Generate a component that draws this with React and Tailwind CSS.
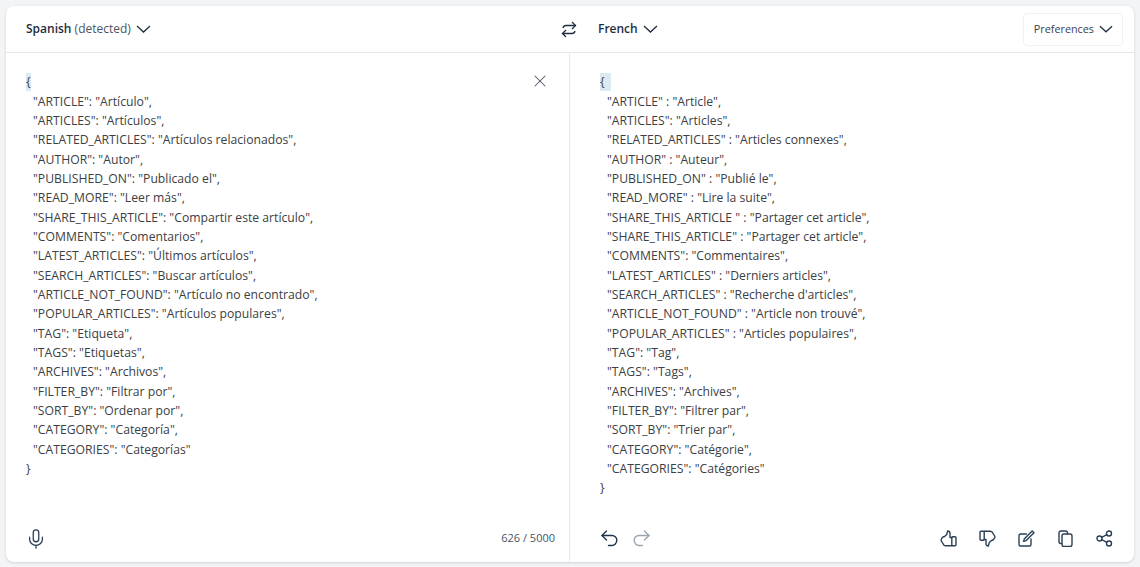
import { X, Mic } from 'lucide-react'

const SOURCE = [
  '"ARTICLE": "Artículo",',
  '"ARTICLES": "Artículos",',
  '"RELATED_ARTICLES": "Artículos relacionados",',
  '"AUTHOR": "Autor",',
  '"PUBLISHED_ON": "Publicado el",',
  '"READ_MORE": "Leer más",',
  '"SHARE_THIS_ARTICLE": "Compartir este artículo",',
  '"COMMENTS": "Comentarios",',
  '"LATEST_ARTICLES": "Últimos artículos",',
  '"SEARCH_ARTICLES": "Buscar artículos",',
  '"ARTICLE_NOT_FOUND": "Artículo no encontrado",',
  '"POPULAR_ARTICLES": "Artículos populares",',
  '"TAG": "Etiqueta",',
  '"TAGS": "Etiquetas",',
  '"ARCHIVES": "Archivos",',
  '"FILTER_BY": "Filtrar por",',
  '"SORT_BY": "Ordenar por",',
  '"CATEGORY": "Categoría",',
  '"CATEGORIES": "Categorías"',
]

const TARGET = [
  '"ARTICLE" : "Article",',
  '"ARTICLES": "Articles",',
  '"RELATED_ARTICLES" : "Articles connexes",',
  '"AUTHOR" : "Auteur",',
  '"PUBLISHED_ON" : "Publié le",',
  '"READ_MORE" : "Lire la suite",',
  '"SHARE_THIS_ARTICLE " : "Partager cet article",',
  '"SHARE_THIS_ARTICLE" : "Partager cet article",',
  '"COMMENTS": "Commentaires",',
  '"LATEST_ARTICLES" : "Derniers articles",',
  '"SEARCH_ARTICLES" : "Recherche d\'articles",',
  '"ARTICLE_NOT_FOUND" : "Article non trouvé",',
  '"POPULAR_ARTICLES" : "Articles populaires",',
  '"TAG": "Tag",',
  '"TAGS": "Tags",',
  '"ARCHIVES": "Archives",',
  '"FILTER_BY": "Filtrer par",',
  '"SORT_BY": "Trier par",',
  '"CATEGORY": "Catégorie",',
  '"CATEGORIES": "Catégories"',
]

function Chevron({ className = 'w-[15px] h-[8px]' }) {
  return (
    <svg viewBox="0 0 15 8" className={className} fill="none" stroke="currentColor" strokeWidth="1.3">
      <path d="M1 1l6.5 6L14 1" />
    </svg>
  )
}

function Icon({ children, className = '' }) {
  return (
    <svg viewBox="0 0 17 17" className={`w-[17px] h-[17px] ${className}`} fill="none" stroke="currentColor" strokeWidth="1.4" strokeLinecap="round" strokeLinejoin="round">
      {children}
    </svg>
  )
}

function SwapIcon() {
  return (
    <svg viewBox="0 0 16 17" className="w-[16px] h-[17px] mr-[-7px] text-[#1f2d3d]" fill="none" stroke="currentColor" strokeWidth="1.3">
      <path d="M11 1l3.500 3.500L11 8" />
      <path d="M14.500 4.500H5C3.500 4.500 2.300 5.500 2 7" />
      <path d="M5 9l-3.500 3.500L5 16" />
      <path d="M1.500 12.500H11c1.500 0 2.700-1 3-2.500" />
    </svg>
  )
}

function ThumbPaths() {
  return (
    <>
      <rect x="11.800" y="6.800" width="4.200" height="9" rx="1" />
      <path d="M11.800 7.500H10V3.300C10 1.900 9 1 7.600 1L6.800 4.400 4.200 6.800H3.200C2 8 1 9 1 10c0 1 1.500 2.500 1.900 3.500.5 1.300 1.300 2.300 2.600 2.300h6.300" />
    </>
  )
}

function EditIcon() {
  return (
    <Icon>
      <path d="M8.500 4H2.500C1.600 4 1 4.600 1 5.500v9C1 15.400 1.600 16 2.500 16h9c.9 0 1.500-.6 1.500-1.500V9" />
      <path d="M14.200 1l1.800 1.800-7.800 7.800-2.600.8.800-2.600z" />
    </Icon>
  )
}

function CopyIcon() {
  return (
    <Icon>
      <path d="M4.500 13.500H4C2.900 13.500 2 12.600 2 11.500V3C2 1.900 2.900 1 4 1h4.500c1.100 0 2 .9 2 2v.5" />
      <rect x="5" y="4" width="10" height="12.500" rx="2" />
    </Icon>
  )
}

function ShareIcon() {
  return (
    <Icon>
      <circle cx="13" cy="3.500" r="2.500" />
      <circle cx="3.500" cy="8.500" r="2.500" />
      <circle cx="13" cy="13.500" r="2.500" />
      <path d="M5.800 7.400l5-2.700M5.800 9.600l5 2.700" />
    </Icon>
  )
}

function UndoIcon({ className }) {
  return (
    <Icon className={className}>
      <path d="M5.500 1L1 5.500 5.500 10" />
      <path d="M1 5.500h10c2.500 0 4.800 2 4.800 4.800s-2.300 5.200-4.800 5.200H7.500" />
    </Icon>
  )
}

function CodeLines({ lines, braceClass }) {
  return (
    <div className="text-[12.2px] leading-[19.33px] text-[#3c4043] whitespace-pre">
      <div><span className={braceClass}>{'{'}</span></div>
      {lines.map((line, i) => (
        <div key={i} className="pl-[7px]">{line}</div>
      ))}
      <div>{'}'}</div>
    </div>
  )
}

export default function App() {
  return (
    <div className="h-[567px] bg-[#f3f4f6] p-[6px] pb-[5px] font-['Open_Sans',sans-serif]">
      <div className="h-full flex flex-col bg-white rounded-lg shadow-[0_1px_3px_rgba(0,0,0,0.14)]">
        {/* Header */}
        <header className="h-[47px] shrink-0 flex items-center border-b border-[#e5e9ee]">
          <div className="w-[564px] flex items-center justify-between pl-5">
            <button className="flex items-center gap-[5px] text-[12px] text-[#1f2d3d]">
              <span><span className="font-semibold">Spanish</span> <span className="text-[#4b5563]">(detected)</span></span>
              <Chevron />
            </button>
            <SwapIcon />
          </div>
          <div className="flex-1 flex items-center justify-between pl-[28px] pr-[11px]">
            <button className="flex items-center gap-[5px] text-[12px] font-semibold text-[#1f2d3d]">
              French
              <Chevron />
            </button>
            <button className="h-[33px] flex items-center gap-[5px] pl-[10px] pr-[9px] text-[10.8px] text-[#374151] border border-[#f0f1f3] rounded">
              Preferences
              <Chevron className="w-[14px] h-[8px] text-[#1f2d3d]" />
            </button>
          </div>
        </header>

        {/* Panels */}
        <div className="flex-1 flex min-h-0">
          <section className="w-[564px] shrink-0 flex flex-col border-r border-[#e5e9ee]">
            <div className="flex-1 flex justify-between pt-[19.300px] pl-5 pr-[19px]">
              <CodeLines lines={SOURCE} braceClass="inline-block h-[18px] leading-[18px] bg-[#dbeaf1]" />
              <X size={20} strokeWidth={1.25} className="text-[#4b5563] mt-[-1px]" />
            </div>
            <div className="h-[47px] shrink-0 flex items-center justify-between pl-[19px] pr-[14px]">
              <Mic size={22} strokeWidth={1.4} className="text-[#2b3f55]" />
              <span className="text-[11px] text-[#4b5563]">626 / 5000</span>
            </div>
          </section>
          <section className="flex-1 flex flex-col">
            <div className="flex-1 pt-[19.300px] pl-[30px]">
              <CodeLines lines={TARGET} braceClass="inline-block h-[18px] leading-[18px] bg-[#dbeaf1] pr-[6px]" />
            </div>
            <div className="h-[47px] shrink-0 flex items-center justify-between pl-[31px] pr-[21px]">
              <div className="flex items-center gap-[15px]">
                <UndoIcon className="text-[#1f3347]" />
                <UndoIcon className="text-[#9aa5b1] -scale-x-100" />
              </div>
              <div className="flex items-center gap-[22px] text-[#2b3f55]">
                <Icon><ThumbPaths /></Icon>
                <Icon className="rotate-180"><ThumbPaths /></Icon>
                <EditIcon />
                <CopyIcon />
                <ShareIcon />
              </div>
            </div>
          </section>
        </div>
      </div>
    </div>
  )
}
